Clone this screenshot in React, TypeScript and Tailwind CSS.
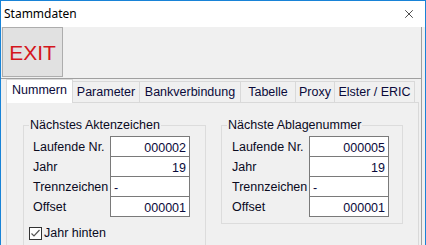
import { X } from 'lucide-react';

const rowsLeft = [
  { label: 'Laufende Nr.', value: '000002', align: 'right' },
  { label: 'Jahr', value: '19', align: 'right' },
  { label: 'Trennzeichen', value: '-', align: 'left' },
  { label: 'Offset', value: '000001', align: 'right' },
];

const rowsRight = [
  { label: 'Laufende Nr.', value: '000005', align: 'right' },
  { label: 'Jahr', value: '19', align: 'right' },
  { label: 'Trennzeichen', value: '-', align: 'left' },
  { label: 'Offset', value: '000001', align: 'right' },
];

const tabs = [
  { name: 'Parameter', w: 'w-[67px]' },
  { name: 'Bankverbindung', w: 'w-[101px]' },
  { name: 'Tabelle', w: 'w-[55px]' },
  { name: 'Proxy', w: 'w-[39px]' },
  { name: 'Elster / ERIC', w: 'w-[80px]' },
];

function Fields({ rows }: { rows: typeof rowsLeft }) {
  return (
    <div className="flex flex-col">
      {rows.map((r, i) => (
        <div key={r.label} className={`flex items-center ${i > 0 ? '-mt-px' : ''}`}>
          <span className="w-[77px] pt-[1px] text-[12.5px] leading-none text-[#0a0a1e]">{r.label}</span>
          <div
            className={`flex h-[21px] w-[80px] items-center border border-[#7a7a7a] bg-white px-[3px] pt-[3px] text-[12.5px] leading-none text-[#0a0a3a] ${
              r.align === 'right' ? 'justify-end' : 'justify-start'
            }`}
          >
            {r.value}
          </div>
        </div>
      ))}
    </div>
  );
}

export default function App() {
  return (
    <div
      className="h-[245px] w-[426px] overflow-hidden bg-[#1883d7] px-px pt-px"
      style={{ fontFamily: '"Liberation Sans", Arial, sans-serif' }}
    >
      <div className="flex h-full flex-col bg-[#f0f0f0]">
        {/* title bar */}
        <div className="flex h-[26px] shrink-0 items-center justify-between bg-white pl-[3px] pr-[9px]">
          <span className="text-[12px] text-black" style={{ fontFamily: '"Noto Sans", sans-serif' }}>
            Stammdaten
          </span>
          <X size={14} strokeWidth={1.2} className="text-black" />
        </div>

        <div className="flex flex-1 flex-col pr-[3px]">
          <div className="flex flex-1 flex-col border-r border-[#a0a0a0]">
            {/* toolbar */}
            <div className="h-[52px] shrink-0 border-b border-[#a0a0a0] pl-px">
              <button className="flex h-[50px] w-[61px] items-center justify-center border border-[#adadad] bg-[#e1e1e1] pt-[1px] text-[21px] text-[#d4161c]">
                EXIT
              </button>
            </div>

            {/* tabs */}
            <div className="ml-[5px] mr-[2px] flex flex-1 flex-col">
              <div className="relative z-10 flex h-[23px] shrink-0 items-end">
                <div className="-mb-px flex h-[24px] w-[67px] items-center justify-center border border-b-0 border-[#d9d9d9] bg-white pb-[2px] text-[12.5px] text-[#0a0a3a]">
                  Nummern
                </div>
                {tabs.map((t) => (
                  <div
                    key={t.name}
                    className={`flex h-[21px] ${t.w} items-center justify-center border border-l-0 border-b-0 border-[#d9d9d9] bg-[#f0f0f0] text-[12.5px] text-[#0a0a3a]`}
                  >
                    {t.name}
                  </div>
                ))}
              </div>

              <div className="flex flex-1 gap-[15px] border border-b-0 border-[#d9d9d9] pl-[16px] pt-[15px]">
                <fieldset className="h-[140px] w-[183px] shrink-0 border border-[#dcdcdc] px-[9px] pt-[4px]">
                  <legend className="-ml-[4px] px-[1px] text-[12.5px] leading-[14px] text-[#0a0a1e]">
                    Nächstes Aktenzeichen
                  </legend>
                  <Fields rows={rowsLeft} />
                  <label className="-ml-[4px] mt-[10px] flex items-center gap-[2px] text-[12.5px] leading-none text-[#0a0a1e]">
                    <span className="flex h-[13px] w-[13px] items-center justify-center border border-[#333333] bg-white">
                      <svg width="11" height="11" viewBox="0 0 11 11">
                        <path d="M1.5 5.5 L4 8 L9.5 2" fill="none" stroke="#555" strokeWidth="1.2" />
                      </svg>
                    </span>
                    Jahr hinten
                  </label>
                </fieldset>

                <fieldset className="h-[106px] w-[182px] shrink-0 border border-[#dcdcdc] px-[10px] pt-[4px]">
                  <legend className="-ml-[5px] px-[1px] text-[12.5px] leading-[14px] text-[#0a0a1e]">
                    Nächste Ablagenummer
                  </legend>
                  <Fields rows={rowsRight} />
                </fieldset>
              </div>
            </div>
          </div>
        </div>
      </div>
    </div>
  );
}
